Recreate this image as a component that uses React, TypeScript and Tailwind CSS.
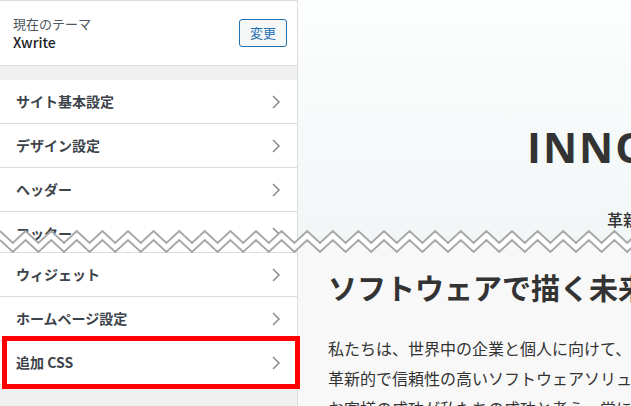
import React from 'react';

const FONT = { fontFamily: '"Noto Sans CJK JP", "Noto Sans", sans-serif' };

const TOP_ROWS = ['サイト基本設定', 'デザイン設定', 'ヘッダー', 'フッター'];
const BOTTOM_ROWS = ['ウィジェット', 'ホームページ設定', '追加 CSS'];

function Chevron() {
  return (
    <svg width="10" height="16" viewBox="0 0 10 16" className="shrink-0">
      <polyline points="2,2 8,8 2,14" fill="none" stroke="#8c8f94" strokeWidth="1.6" />
    </svg>
  );
}

function NavRow({ label }: { label: string }) {
  return (
    <div className="flex h-[44px] shrink-0 items-center justify-between border-b border-[#dcdcde] bg-white pl-4 pr-[16px]">
      <span className="text-[14px] font-bold text-[#3c434a]">{label}</span>
      <Chevron />
    </div>
  );
}

// 上下2枚のスクリーンショットをつなぐギザギザ
function TornEdge() {
  const period = 25.6;
  const amp = 12;
  const top: string[] = [];
  const bottom: string[] = [];
  for (let i = 0; i * (period / 2) <= 660; i++) {
    const x = i * (period / 2);
    const y = i % 2 === 0 ? 5 : 5 + amp;
    top.push(`${x},${y}`);
    bottom.push(`${x},${y + 9}`);
  }
  const fill = `${top.join(' ')} ${[...bottom].reverse().join(' ')}`;
  return (
    <svg className="pointer-events-none absolute left-0 top-[226px]" width="631" height="34" viewBox="0 0 631 34">
      <polygon points={fill} fill="#ffffff" />
      <polyline points={top.join(' ')} fill="none" stroke="#a7a7a7" strokeWidth="2" />
      <polyline points={bottom.join(' ')} fill="none" stroke="#a7a7a7" strokeWidth="2" />
    </svg>
  );
}

export default function App() {
  return (
    <div className="relative h-[406px] w-[631px] overflow-hidden bg-white" style={FONT}>
      {/* 上半分 */}
      <div className="flex h-[242px] overflow-hidden">
        <aside className="flex w-[298px] shrink-0 flex-col border-r border-[#dcdcde] bg-[#f0f0f0]">
          <div className="flex h-[66px] shrink-0 items-center justify-between border-y border-[#dcdcde] bg-white pl-[13px] pr-[10px]">
            <div className="flex flex-col">
              <span className="text-[13px] leading-[19px] text-[#50575e]">現在のテーマ</span>
              <span className="text-[14px] font-medium leading-[19px] text-[#1d2327]">Xwrite</span>
            </div>
            <button
              type="button"
              className="flex h-[28px] w-[48px] items-center justify-center rounded-[3px] border border-[#2271b1] bg-[#f6f7f7] text-[13px] text-[#2271b1]"
            >
              変更
            </button>
          </div>
          <div className="h-[14px] shrink-0" />
          {TOP_ROWS.map((r) => (
            <NavRow key={r} label={r} />
          ))}
        </aside>
        <main className="flex flex-1 flex-col overflow-hidden bg-gradient-to-b from-[#fdfefe] to-[#f1f6f6]">
          <div
            className="mt-[121px] whitespace-nowrap pl-[229px] text-[42px] font-bold leading-[52px] tracking-[2px] text-[#333333]"
            style={{ fontFamily: '"Open Sans", sans-serif' }}
          >
            INNOVATION
          </div>
          <div className="mt-[34px] whitespace-nowrap pl-[309px] text-[16px] font-medium leading-[24px] text-[#333333]">
            革新的な技術
          </div>
        </main>
      </div>

      {/* 下半分 */}
      <div className="flex h-[164px] overflow-hidden">
        <aside className="flex w-[298px] shrink-0 flex-col border-r border-[#dcdcde] bg-[#f0f0f0]">
          <div className="h-[11px] shrink-0 border-b border-[#dcdcde] bg-white" />
          {BOTTOM_ROWS.map((r) => (
            <NavRow key={r} label={r} />
          ))}
        </aside>
        <main className="flex flex-1 flex-col overflow-hidden bg-[#f8f8f8] pl-[30px] pt-[25px] text-[#333333]">
          <h1 className="whitespace-nowrap text-[29px] font-bold leading-[40px]">ソフトウェアで描く未来</h1>
          <p className="mt-[26px] whitespace-nowrap text-[16px] leading-[30px]">
            私たちは、世界中の企業と個人に向けて、
            <br />
            革新的で信頼性の高いソフトウェアソリューションを
            <br />
            お客様の成功が私たちの成功と考え、常に
          </p>
        </main>
      </div>

      <TornEdge />

      {/* 強調枠 */}
      <div className="pointer-events-none absolute left-[2px] top-[336px] h-[53px] w-[298px] border-[5px] border-[#ff0000]" />
    </div>
  );
}
